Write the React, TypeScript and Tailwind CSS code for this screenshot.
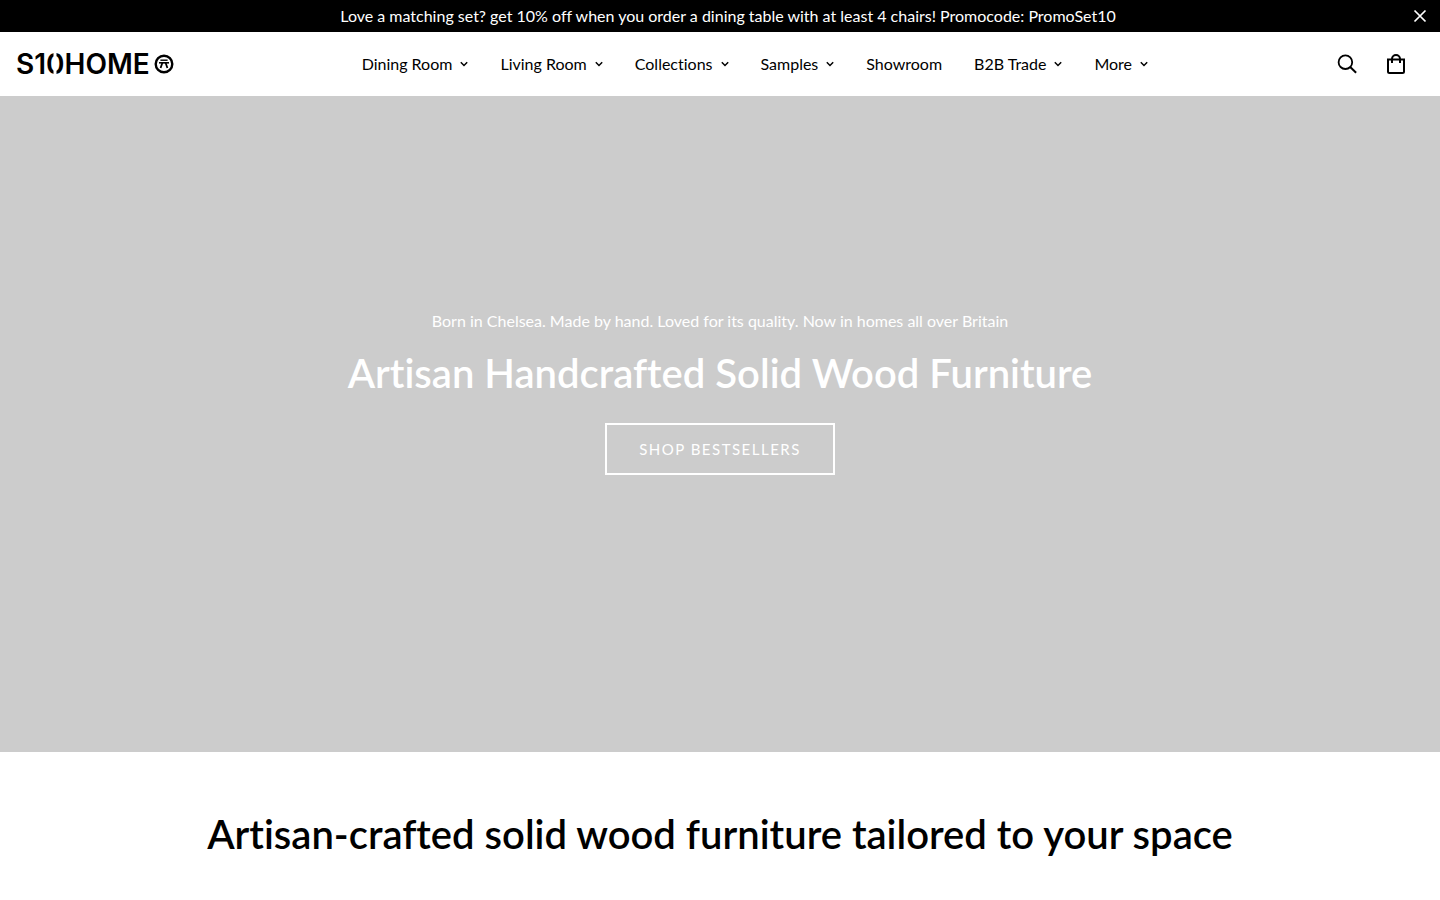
import { useState } from 'react';

interface NavItem {
  label: string;
  hasMenu: boolean;
}

const NAV_ITEMS: NavItem[] = [
  { label: 'Dining Room', hasMenu: true },
  { label: 'Living Room', hasMenu: true },
  { label: 'Collections', hasMenu: true },
  { label: 'Samples', hasMenu: true },
  { label: 'Showroom', hasMenu: false },
  { label: 'B2B Trade', hasMenu: true },
  { label: 'More', hasMenu: true },
];

function CloseIcon() {
  return (
    <svg viewBox="0 0 16 16" className="h-4 w-4" fill="none" stroke="currentColor" strokeWidth="1.7">
      <path d="M2.5 2.5l11 11M13.5 2.5l-11 11" />
    </svg>
  );
}

function ChevronIcon() {
  return (
    <svg viewBox="0 0 8 8" className="h-2 w-2" fill="none" stroke="currentColor" strokeWidth="1.5">
      <path d="M.8 2.3L4 5.5l3.2-3.2" />
    </svg>
  );
}

function SearchIcon() {
  return (
    <svg viewBox="0 0 24 24" className="h-6 w-6" fill="none" stroke="currentColor" strokeWidth="1.8">
      <circle cx="9.4" cy="10.2" r="6.8" />
      <path d="M14.2 15l5.9 5.8" strokeWidth="2" />
    </svg>
  );
}

function BagIcon() {
  return (
    <svg viewBox="0 0 24 24" className="h-6 w-6" fill="none" stroke="currentColor" strokeWidth="2">
      <path d="M4 7.5h16v12a1.5 1.5 0 0 1-1.5 1.5h-13A1.5 1.5 0 0 1 4 19.5z" />
      <path d="M8 11V7a4 4 0 0 1 8 0v4" />
    </svg>
  );
}

function AnnouncementBar({ onClose }: { onClose: () => void }) {
  return (
    <div className="flex h-8 items-center bg-black pl-11 pr-3 text-white">
      <p className="flex-1 text-center text-base leading-6">
        Love a matching set? get 10% off when you order a dining table with at least 4 chairs! Promocode: PromoSet10
      </p>
      <button type="button" aria-label="Close" onClick={onClose}>
        <CloseIcon />
      </button>
    </div>
  );
}

function Logo() {
  return (
    <a href="#" aria-label="S10Home" className="flex shrink-0 items-center gap-1 font-[Inter,sans-serif] text-[28px] font-semibold leading-8">
      <span className="whitespace-nowrap">
        S1
        <span className="relative inline-block">
          0
          {/* splits the zero into two brackets */}
          <span className="absolute inset-y-0 left-1/2 w-[3px] -translate-x-1/2 bg-white" />
        </span>
        HOME
      </span>
      <svg viewBox="0 0 20 20" className="h-5 w-5" fill="none" stroke="currentColor">
        <circle cx="10" cy="10" r="8.3" strokeWidth="2.4" />
        <path d="M6.4 6.2h7.2" strokeWidth="1.4" />
        <path d="M5 8.8h10" strokeWidth="1.6" />
        <path d="M8.4 8.8L6.6 14M11.6 8.8l1.8 5.2" strokeWidth="1.8" />
      </svg>
    </a>
  );
}

function Header() {
  return (
    <header className="flex h-16 items-center bg-white pl-4 pr-8">
      <Logo />
      <nav className="flex flex-1 items-center justify-center gap-8">
        {NAV_ITEMS.map((item) => (
          <a key={item.label} href="#" className="flex items-center gap-2 whitespace-nowrap text-base leading-6">
            {item.label}
            {item.hasMenu ? <ChevronIcon /> : null}
          </a>
        ))}
      </nav>
      <div className="flex items-center gap-6">
        <button type="button" aria-label="Search">
          <SearchIcon />
        </button>
        <button type="button" aria-label="Cart">
          <BagIcon />
        </button>
      </div>
    </header>
  );
}

function Hero() {
  return (
    <section className="flex min-h-[656px] flex-col items-center justify-center bg-[#cccccc] px-4 pb-16 text-center text-white">
      <p className="text-base leading-6">
        Born in Chelsea. Made by hand. Loved for its quality. Now in homes all over Britain
      </p>
      <h1 className="mt-4 text-[40px] font-semibold leading-12">Artisan Handcrafted Solid Wood Furniture</h1>
      <a href="#" className="mt-[26px] border-2 border-white px-8 py-3 text-[15px] leading-6 tracking-widest">
        SHOP BESTSELLERS
      </a>
    </section>
  );
}

export default function App() {
  const [showBar, setShowBar] = useState(true);

  return (
    <div className="min-h-screen bg-white font-[Lato,sans-serif] text-black [font-variant-ligatures:none]">
      {showBar ? <AnnouncementBar onClose={() => setShowBar(false)} /> : null}
      <Header />
      <main>
        <Hero />
        <section className="px-4 pt-[58px] text-center">
          <h2 className="text-[40px] font-semibold leading-12">
            Artisan-crafted solid wood furniture tailored to your space
          </h2>
        </section>
      </main>
    </div>
  );
}
